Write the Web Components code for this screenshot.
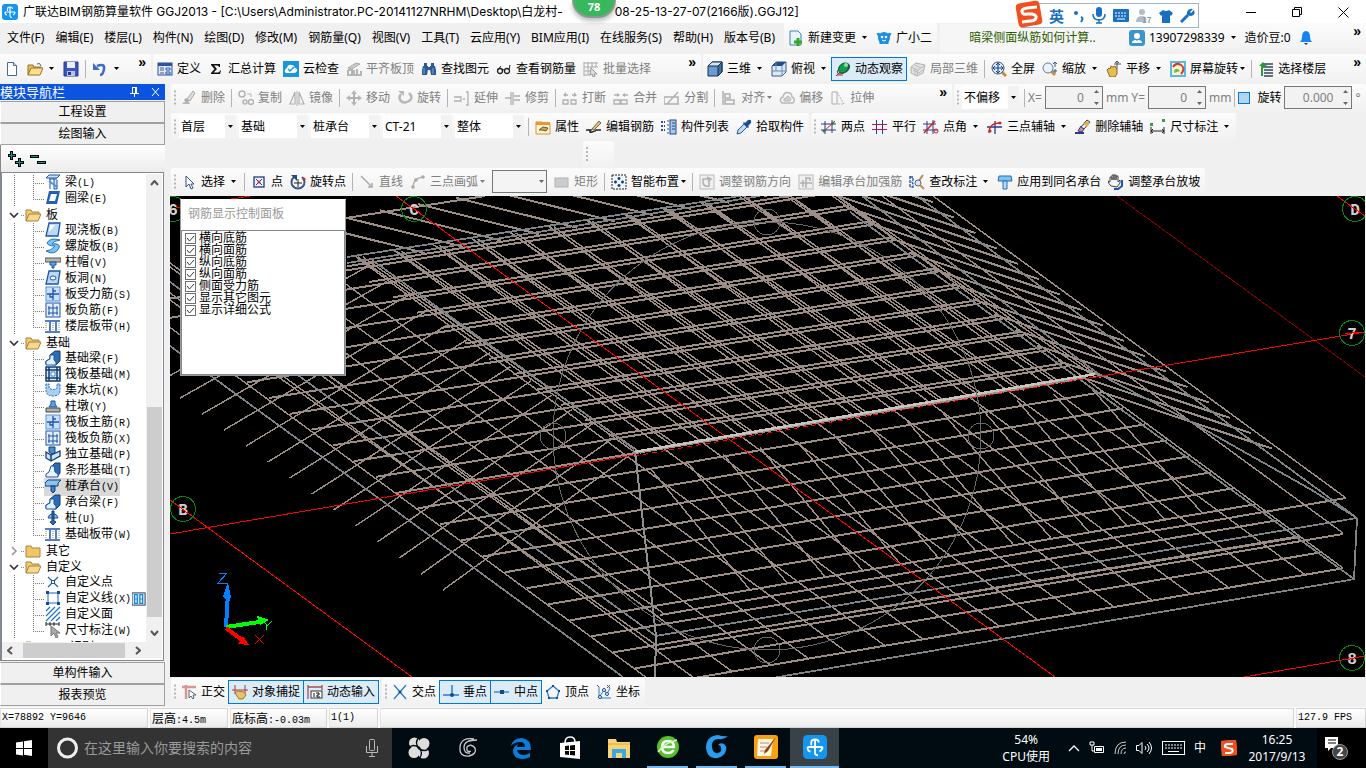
<!DOCTYPE html>
<html lang="zh-CN">
<head>
<meta charset="utf-8">
<title>广联达BIM钢筋算量软件 GGJ2013</title>
<style>
    html, body { height: 100%; margin: 0; }
    body {
        background: #f0f0f0;
        color: #000;
        font: 12px/16px "Noto Sans", "Noto Sans CJK SC", sans-serif;
        overflow: hidden;
    }
</style>
</head>
<body>
<ggj-app></ggj-app>

<script>
const ICONS = {
    app: '<rect width="16" height="16" rx="3" fill="#1296f0"/><path d="M5.500 7V5q0-2 2.500-2t2.500 2M8 3v9q0 1.500 2 1.500M3 8h10M3 8q0 3 2 3M13 8q0 2-2 3" fill="none" stroke="#fff" stroke-width="1.200"/>',
    newdoc: '<path d="M3.500 1.500h6l3 3v10h-9z" fill="#fff" stroke="#4a6a94"/><path d="M9.500 1.500v3h3" fill="#cfe0f4" stroke="#4a6a94"/>',
    open: '<path d="M1 14V4h5l1 2h7v3" fill="#f0c050" stroke="#94702a"/><path d="M1 14l3-7h12l-3 7z" fill="#ffe08a" stroke="#94702a"/><path d="M10 3q3-2 4 2" fill="none" stroke="#557"/>',
    save: '<path d="M1 1h14v14H1z" fill="#3a56c0" stroke="#223a8c"/><path d="M4 1h8v6H4z" fill="#e8eefc"/><path d="M4 10h8v5H4z" fill="#b8c4e8"/><path d="M5 11h3v3H5z" fill="#223a8c"/>',
    undo: '<path d="M5 5q8-3 7 3t-4 6" fill="none" stroke="#3c6cc8" stroke-width="2.500"/><path d="M1 2v7h7z" fill="#3c6cc8"/>',
    define: '<rect x="1" y="2" width="14" height="12" fill="#dfeafc" stroke="#2a52a0"/><path d="M1 2h14v3H1z" fill="#2a52a0"/><path d="M3 7h4M3 9h4M3 12h4" stroke="#557"/><path d="M9 7h4v2H9zM9 11h4v2H9z" fill="#fff" stroke="#2a52a0"/>',
    sigma: '<path d="M3 3h9v3h-1q0-1.500-2-1.500H6L9 8l-3.500 3.500H10q1.500 0 2-2h1L12 13H3v-1l3.500-4L3 4z" fill="#111"/>',
    cloud: '<rect width="16" height="16" fill="#1a96dc"/><path d="M4 12q-3 0-2-3 1-2 2-2 1-4 5-3 2 0 3 3 3 1 2 3-1 2-3 2z" fill="#fff"/><path d="M5 8l2 2 4-4" fill="none" stroke="#1a96dc" stroke-width="1.500"/>',
    slabtop: '<path d="M2 7l8-5 4 1-8 5z" fill="#ccc" stroke="#aaa"/><path d="M2 9h4v5h9v-4M8 9v4M11 8v5M2 9v5h5" fill="none" stroke="#b4b4b4" stroke-width="2"/>',
    binocular: '<path d="M3 2h3v3H3zM10 2h3v3h-3zM2 5h5v3l-1 6H1V9zM9 5h5l1 4v5h-5L9 8z" fill="#2c5a94"/><path d="M6 6h4v3H6z" fill="#2c5a94"/><path d="M3 7v6M12 7v6" stroke="#8ac"/>',
    glasses: '<circle cx="4" cy="10" r="2.500" fill="none" stroke="#222" stroke-width="1.300"/><circle cx="11" cy="10" r="2.500" fill="none" stroke="#222" stroke-width="1.300"/><path d="M6 9q1-1 2 0M2 9l3-4M13 9l1-5" fill="none" stroke="#222"/>',
    batch: '<path d="M1 1v14M5 1v13M9 1v6M13 1v5M1 2h14M1 6h14M1 10h7M1 14h6" stroke="#aaa" fill="none"/><path d="M8 7l6 6h-3l1 3h-2l-1-3-2 1z" fill="#ddd" stroke="#999"/>',
    cube: '<path d="M1 5l4-4h10v10l-4 4H1z" fill="#6a9cd0" stroke="#16304c"/><path d="M1 5l4-4h10l-4 4z" fill="#d4e6f8" stroke="#16304c"/><path d="M11 5v10l4-4V1z" fill="#3e6ea8" stroke="#16304c"/>',
    cubetop: '<path d="M1 5l4-4h10v10l-4 4H1z" fill="#dceaf8" stroke="#3a5a80"/><path d="M1 5l4-4h10l-4 4z" fill="#204c88"/><path d="M11 5v10M5 1v9H1M5 10h10" stroke="#6a8cb4" fill="none"/>',
    orbit: '<ellipse cx="9" cy="7" rx="6" ry="4.500" transform="rotate(-35 9 7)" fill="#1c9a4c" stroke="#0a6030"/><path d="M1 15l4-4M3 9q-2 4 2 4 8-1 9-9" stroke="#345" fill="none"/><circle cx="11" cy="4" r="2" fill="#8ee0a0"/><path d="M2 14h6" stroke="#c33"/>',
    localcube: '<path d="M1 6l5-4 9 2-2 8-6 3-6-3z" fill="#e4e4e4" stroke="#b0b0b0"/><path d="M1 6l7 3 7-5M8 9l-1 6M5 4l6 3M3 9l6 3 5-4M5 8v6" fill="none" stroke="#b8b8b8"/>',
    full: '<path d="M10 10l5 5" stroke="#c8903c" stroke-width="3"/><circle cx="7" cy="7" r="6" fill="#dceaf8" stroke="#34506c"/><path d="M7 2v10M2 7h10" stroke="#234a8c" stroke-width="1.200"/><path d="M5 4l2-2 2 2M5 10l2 2 2-2M4 5L2 7l2 2M10 5l2 2-2 2" fill="none" stroke="#234a8c"/>',
    zoom: '<path d="M9 10l4 4" stroke="#c8903c" stroke-width="3"/><circle cx="6" cy="7" r="5" fill="#e8f2fc" stroke="#6a7c8c"/><path d="M13 1v5M11 3l2-2 2 2M11 10h4M13 8v4" stroke="#345a90" fill="none"/>',
    pan: '<path d="M1 9l2-2 1 1 1-3 2 1 2-1 1 2 1 1v5l-2 3H4z" fill="#e8bc50" stroke="#8c6a20"/><path d="M11 0v8M8 3h7M9 2l2-2 2 2" stroke="#456" fill="none"/>',
    screenrot: '<rect width="16" height="16" fill="#58b8e8"/><rect x="2" y="2" width="12" height="12" fill="#fff4d0"/><path d="M3 6q3-5 8-2t0 9" fill="none" stroke="#d43a2c" stroke-width="2"/><path d="M4 12q0-5 4-4l2 2z" fill="#6cbc4c"/>',
    floors: '<path d="M4 3h11M4 6h11M6 9h9M6 12h9M6 15h9" stroke="#345" stroke-width="1.500"/><path d="M1 5l4-4 4 4z" fill="#2a9a3c"/><path d="M4 5v10" stroke="#2a9a3c" stroke-width="2"/>',
    report: '<path d="M2 1h8l3 3v11H2z" fill="#e8f4fc" stroke="#3a84b8"/><path d="M10 8v8M6 12h8" stroke="#3aa424" stroke-width="3"/>',
    mascot: '<path d="M2 3q1 4 4 3M14 3q-1 4-4 3M5 11v3M11 11v3" fill="none" stroke="#1a8ee0" stroke-width="3"/><circle cx="8" cy="8" r="6" fill="#1a8ee0"/><circle cx="6" cy="7" r="1.300" fill="#fff"/><circle cx="10" cy="7" r="1.300" fill="#fff"/><path d="M6 10q2 2 4 0" stroke="#fff" fill="none"/>',
    user: '<rect width="16" height="16" rx="3" fill="#3c94cc"/><circle cx="8" cy="6" r="3" fill="#fff"/><path d="M3 13q0-3 4-3l1 1 1-1q4 0 4 3z" fill="#fff"/>',
    bell: '<path d="M8 1q4 0 4 6 0 3 2 5H2q2-2 2-5 0-6 4-6z" fill="#1684f0"/><path d="M6 13h4l-2 2z" fill="#234"/>',
    erase: '<path d="M1 14h8l-1-2H3z" fill="#b8b8b8"/><path d="M6 9l6-8 2 2-5 8z" fill="#ddd" stroke="#aaa"/><path d="M4 9l3 3" stroke="#aaa" stroke-width="3"/>',
    copy: '<circle cx="4" cy="4" r="3" fill="none" stroke="#b4b4b4" stroke-width="1.500"/><circle cx="7" cy="12" r="2" fill="none" stroke="#b4b4b4" stroke-width="1.500"/><circle cx="13" cy="12" r="2.500" fill="none" stroke="#b4b4b4" stroke-width="1.500"/><path d="M9 4h4v3" fill="none" stroke="#b4b4b4"/>',
    mirror: '<path d="M6 2v12H1zM10 2v12h5z" fill="none" stroke="#b0b0b0" stroke-width="1.200"/><path d="M8 1v15" stroke="#b0b0b0"/>',
    move: '<path d="M8 2v12M2 8h12" stroke="#b0b0b0" stroke-width="2"/><path d="M5 4l3-4 3 4zM5 12l3 4 3-4zM4 5L0 8l4 3zM12 5l4 3-4 3z" fill="#b8b8b8"/>',
    rotate: '<path d="M4 4q-3 4 0 7t8 0 0-8" fill="none" stroke="#b8b8b8" stroke-width="2.500"/><path d="M1 1h6v5z" fill="#b8b8b8"/>',
    extend: '<path d="M0 7h7v4H0M9 9h2M12 2h2v13h-2" fill="none" stroke="#b0b0b0" stroke-width="1.300"/>',
    trim: '<path d="M0 8h6M6 2v13M8 2v13M9 6h6M9 10h6" fill="none" stroke="#b0b0b0" stroke-width="1.300"/>',
    break: '<path d="M1 10h5v4H1zM9 10h5v4H9zM2 5h4M10 5h4" fill="none" stroke="#b0b0b0" stroke-width="1.300"/><path d="M4 2L1 5l3 2M12 2l3 3-3 2" fill="#b0b0b0"/>',
    merge: '<path d="M1 10h6v4H1zM8 10h6v4H8zM1 5h5M10 5h5" fill="none" stroke="#b0b0b0" stroke-width="1.300"/><path d="M4 3l3 2-3 2M12 3L9 5l3 2" fill="#b0b0b0"/>',
    split: '<path d="M0 7h14v7H0zM3 14L14 2" fill="none" stroke="#b0b0b0" stroke-width="1.500"/>',
    align: '<path d="M2 1v14M4 4h5v4H4zM4 10h9v4H4z" fill="none" stroke="#b0b0b0" stroke-width="1.500"/>',
    offset: '<path d="M3 13q-4-4 1-6 1-6 7-4 2 1 2 4 4 2 1 6z" fill="none" stroke="#b8b8b8" stroke-width="1.500"/><path d="M5 11q-1-3 2-3 2-4 4 0 2 1 0 3z" fill="#d0d0d0" stroke="#b8b8b8"/>',
    stretch: '<path d="M2 2h5v12H2z" fill="none" stroke="#b0b0b0"/><path d="M7 2l7 12H7" fill="none" stroke="#b0b0b0" stroke-dasharray="2 1"/>',
    props: '<path d="M1 3h6l1 2h7v10H1z" fill="#fff4d8" stroke="#e09030"/><path d="M1 3h14v3H1z" fill="#e8982c"/><path d="M4 11l4-3 5 1-2 3-4-1z" fill="#d8a83c" stroke="#654"/>',
    editbar: '<path d="M0 11h5q-3 3 1 2t4-2h5" fill="none" stroke="#222" stroke-width="1.300"/><path d="M6 10l7-8 2 2-7 7z" fill="#e8c060" stroke="#765"/>',
    list: '<path d="M0 3h4M0 7h4M0 11h4" stroke="#2a52a0" stroke-width="2" stroke-dasharray="2 1"/><path d="M6 2h2M6 6h2M6 10h2M6 14h2" stroke="#2a52a0"/><rect x="9" y="1" width="6" height="14" fill="#a8c8f0" stroke="#234a80"/><path d="M11 4h3M11 7h3M11 10h3" stroke="#234a80"/>',
    picker: '<path d="M1 15l1-4 6-6 3 3-6 6z" fill="#bcdcf8" stroke="#2a5a9a"/><path d="M7 4l5 5 1-1-1-1 3-3q1-4-3-3L9 4 8 3z" fill="#1c4c94"/>',
    twopoint: '<path d="M4 2v13M11 1v13M0 5h15M0 11h15" stroke="#2a3a8a"/><path d="M2 13L14 2" stroke="#c22"/><circle cx="3" cy="12" r="1.500" fill="#284"/><circle cx="12" cy="4" r="1.500" fill="#284"/>',
    parallel: '<path d="M4.500 1v14M10.500 1v14" stroke="#2a3a8a"/><path d="M0 5.500h15M0 10.500h15" stroke="#b02040"/>',
    angle: '<path d="M4 2v13M10 1v14M0 5h13M0 11h15" stroke="#2a3a8a"/><path d="M1 14L12 2" stroke="#c22" stroke-width="1.500"/><circle cx="13" cy="12" r="2" fill="none" stroke="#c22"/>',
    threeaxis: '<path d="M0 8h15M8 2v13" stroke="#2a3a8a" stroke-width="1.300"/><path d="M2 14q0-10 11-10" fill="none" stroke="#c22" stroke-width="1.300"/><circle cx="13" cy="4" r="1.500" fill="#c22"/><circle cx="3" cy="12" r="1.500" fill="#c22"/>',
    delaxis: '<path d="M0 14h9" stroke="#2a3a8a" stroke-width="2"/><path d="M3 12l3-5 3 3-2 3z" fill="#d88" stroke="#2a3a8a"/><path d="M6 8l6-7 3 2-6 7z" fill="#f4e8c0" stroke="#2a3a8a"/><path d="M9 5l3 3 3-4-3-2z" fill="#e8b040"/>',
    dimension: '<path d="M1 8v7M14 8v7M1 12h13M3 10l-2 2 2 2M12 10l2 2-2 2" fill="none" stroke="#222"/><path d="M0 4h3v3H0zM12 0h3v3h-3z" fill="#3a9a4a"/>',
    cursor: '<path d="M5 2v11l3-3 2 5 2-1-2-4h3z" fill="#fff" stroke="#34507c"/>',
    point: '<rect x="3" y="3" width="10" height="10" fill="#eef4ff" stroke="#223a80" stroke-width="1.300"/><path d="M5 5l6 6M11 5l-6 6" stroke="#223a80"/><circle cx="8" cy="8" r="1.500" fill="#d22"/>',
    rotpoint: '<path d="M4 3a6.500 6.500 0 1 0 8 0" fill="none" stroke="#3a5a8c" stroke-width="2"/><path d="M8 5v8M4 9h8" stroke="#222"/><path d="M1 1h6v6z" fill="#24488c"/><circle cx="14" cy="5" r="1.500" fill="#c22"/>',
    line: '<path d="M2 2l11 11" stroke="#aaa" stroke-width="1.500"/><path d="M13 9v4H9" fill="none" stroke="#aaa" stroke-width="1.500"/>',
    arc: '<path d="M3 14Q3 4 13 3" fill="none" stroke="#b0b0b0" stroke-width="1.500"/><circle cx="13" cy="3" r="1.800" fill="#aaa"/><circle cx="3" cy="13" r="1.800" fill="#aaa"/><circle cx="6" cy="6" r="1.800" fill="#aaa"/>',
    rect: '<rect x="1" y="4" width="13" height="9" fill="#ccc" stroke="#b4b4b4"/>',
    smart: '<rect x="1" y="1" width="14" height="14" fill="#eef6ff" stroke="#222" stroke-dasharray="2 1"/><path d="M8 3v3M8 10v3M3 8h3M10 8h3M6.500 4.500h3M6.500 11.500h3M4.500 6.500v3M11.500 6.500v3" stroke="#1c3c74" stroke-width="1.500"/>',
    dirbar: '<rect x="1" y="1" width="14" height="14" fill="#f0f0f0" stroke="#bbb"/><path d="M4 5h6v7q-5 1-6-3zM8 3l4 2-3 3" fill="none" stroke="#b0b0b0" stroke-width="1.500"/>',
    capbar: '<rect x="1" y="1" width="14" height="14" fill="#f0f0f0" stroke="#bbb"/><path d="M8 3v11M2 9h12M8 4h4v3M5 6v7" fill="none" stroke="#b0b0b0" stroke-width="1.500"/>',
    checkdim: '<path d="M1 2v12M1 3h3v3l-1 2 1 2v3H1" fill="none" stroke="#1c54a8" stroke-width="1.300" stroke-dasharray="3 1"/><path d="M14 1L9 8" stroke="#b84" stroke-width="2"/><circle cx="9" cy="9" r="3" fill="#dce8f4" stroke="#567"/><path d="M11 11l4 4" stroke="#c8903c" stroke-width="2"/>',
    applycap: '<path d="M1 7l1-5h12l1 5z" fill="#7cc4f4" stroke="#2a6cb0"/><path d="M6 7h4v8H6z" fill="#b4dcf8" stroke="#2a6cb0"/>',
    slopecap: '<path d="M14 6v6l-4 3H6" fill="none" stroke="#2454b0" stroke-width="2"/><path d="M3 12Q0 9 0 7l2 1V3h2v3-5h2v5-5h2v5-4h2v6l2-2v3l-3 4z" fill="#f4f4f4" stroke="#444"/>',
    ortho: '<path d="M1 3h14M5 1v14" stroke="#d89890" stroke-width="2.500"/><path d="M8 6v8l2-2 2 3 1-1-1-3h3z" fill="#fff" stroke="#567"/>',
    osnap: '<path d="M3 1v9M13 1v9M0 6h16" stroke="#a83838"/><path d="M3 9l3-2 6 1 2 3-3 4H7z" fill="#e8c468" stroke="#a07820"/>',
    dyn: '<path d="M1 1v14M15 1v5M1 3h14" stroke="#a85050" fill="none" stroke-width="1.300"/><rect x="4" y="7" width="11" height="7" fill="#fff" stroke="#333"/><path d="M7 9v4M9 9h3v2h-2v2h3" stroke="#111" fill="none"/>',
    cross: '<path d="M2 1l12 14M14 1L2 15" stroke="#2a7cd0" stroke-width="1.300"/><circle cx="8" cy="8" r="1.500" fill="#124a94"/>',
    perp: '<path d="M0 11h16M9 1v10" stroke="#2a7cd0" stroke-width="1.500"/><circle cx="9" cy="11" r="2" fill="#124a94"/>',
    mid: '<path d="M0 8h15" stroke="#2a7cd0" stroke-width="1.300"/><rect x="6" y="6" width="4" height="4" fill="#124a94"/>',
    vertex: '<path d="M8 2l6 5-2 7H4L2 7z" fill="none" stroke="#2a7cd0" stroke-width="1.300"/><path d="M7 1h2v2H7zM1 6h2v2H1zM13 6h2v2h-2zM3 13h2v2H3zM11 13h2v2h-2z" fill="#124a94"/>',
    coord: '<path d="M3 3v11h12M4 12l4-6 3 4 3-6" fill="none" stroke="#2a7cd0"/><circle cx="8" cy="6" r="1.500" fill="#fff" stroke="#124a94"/><circle cx="11" cy="10" r="1.500" fill="#fff" stroke="#124a94"/><circle cx="4" cy="13" r="1.500" fill="#fff" stroke="#124a94"/><path d="M1 1l2 2M11 1l3 3M14 1l-3 3" stroke="#456"/>',
    folderopen: '<path d="M1 14V3h5l1 2h7v3" fill="#f4cc70" stroke="#a8823c"/><path d="M1 14l3-7h12l-3 7z" fill="#f8d890" stroke="#a8823c"/>',
    folder: '<path d="M1 14V3h5l1 2h8v9z" fill="#f0c668" stroke="#a8823c"/>',
    beam: '<path d="M1 4l3-3h11l-3 3zM4 5h8M5 5v10M9 5v10h3V6" fill="#cfe6fa" stroke="#1c54a8"/><path d="M4 7l8 6" stroke="#4a94d8" stroke-width="2"/>',
    ring: '<path d="M4 1h11l-3 13H1z" fill="#2460b4"/><path d="M6 4h6l-2 7H4z" fill="#fff"/>',
    slab: '<path d="M4 1h11l-2 13H1z" fill="#b8daf8" stroke="#1c54a8" stroke-width="1.300"/><path d="M5 3h5L4 10z" fill="#fff"/>',
    spiral: '<path d="M15 2Q5-1 2 5q1 3 8 3-4 5-9 5 9 5 13-3 2-5-7-4 1-3 8-4z" fill="#7ec0f0" stroke="#1c74c0"/>',
    cap: '<path d="M0 4h16v4H0z" fill="#b8b8b0" stroke="#555"/><path d="M5 8h6v3H9v3H7v-3H5z" fill="#5aa4e0" stroke="#1c54a8"/>',
    hole: '<path d="M4 1h11l-2 13H1z" fill="#b8daf8" stroke="#1c54a8" stroke-width="1.300"/><ellipse cx="8" cy="8" rx="3" ry="2" fill="#fff" stroke="#1c54a8"/>',
    bars: '<rect x="1" y="1" width="14" height="14" fill="#c8e0f8" stroke="#5a8cd0"/><path d="M2 8h12M8 2v12M8 5h3M5 8v3h3" fill="none" stroke="#1c54a8" stroke-width="1.300"/>',
    grid: '<rect x="1" y="1" width="14" height="14" fill="#e4f0fc" stroke="#1c54a8"/><path d="M3 6h10M3 11h10M8 2v12M4 4v9M12 4v9" stroke="#1c54a8"/>',
    strip: '<path d="M0 3h15M0 14h15" stroke="#1c54a8" stroke-width="1.500"/><path d="M5 4v9M11 4v9" stroke="#1c54a8" stroke-width="1.500"/><path d="M1 5v8M8 5v8M14 5v8" stroke="#888" stroke-dasharray="1 1"/>',
    fbeam: '<path d="M1 14v-3l4-2V5l5-4h5v10l-4 4z" fill="#2c6cb4" stroke="#123c74"/><path d="M5 5h4v5l2 2v3H1v-4l4-2z" fill="#e0f0fc" stroke="#1c54a8"/>',
    raft: '<rect x="1" y="1" width="14" height="14" fill="#d8e8f8" stroke="#123c74" stroke-width="1.500"/><path d="M4 1v14M12 1v14M1 4h14M1 12h14" stroke="#123c74" stroke-width="1.500"/><path d="M6 6h4v4H6z" fill="#fff" stroke="#4a84c0"/>',
    sump: '<path d="M1 2v6q0 6 7 6t7-6V2h-3v4q-4 3-8 0V2z" fill="#a8d0f4" stroke="#2464b0" stroke-dasharray="2 1"/>',
    pier: '<path d="M1 10h14v4H1z" fill="#b0b0a8" stroke="#444"/><path d="M6 3h4v3l2 3H4l2-3z" fill="#5aa4e0" stroke="#1c54a8"/>',
    pad: '<path d="M1 6l5 3 9-4v5l-9 5-5-3z" fill="#cce4f8" stroke="#123c74" stroke-width="1.300"/><path d="M4 1h6v6l-3 1-3-2z" fill="#4a8ccc" stroke="#123c74"/><path d="M6 9v6" stroke="#123c74" stroke-width="1.500"/>',
    stripf: '<path d="M6 5l4-4h5v10l-3 4z" fill="#2c6cb4" stroke="#123c74"/><path d="M6 4h3l1 6 3 2v3H1v-3l3-2z" fill="#e8f4fc" stroke="#1c54a8"/>',
    pilecap: '<path d="M0 5l3-3h13l-3 3v3H0z" fill="#8cc4f0" stroke="#123c74"/><path d="M6 8h4v5l-2 2-2-2z" fill="#3c84cc" stroke="#123c74"/>',
    pile: '<path d="M3 8q1-4 4-4h2q3 0 4 4z" fill="#8cc4f0" stroke="#1c4c94"/><path d="M7 1h2v10l2 1-3 3-3-3 2-1z" fill="#2c6cb4" stroke="#123c74"/>',
    custpoint: '<path d="M3 3l10 10M13 3L3 13" stroke="#1c64b8" stroke-width="1.200"/><rect x="6.500" y="6.500" width="3" height="3" fill="#fff" stroke="#1c54a8"/>',
    custline: '<rect x="3" y="3" width="10" height="10" fill="none" stroke="#1c64b8"/><path d="M1 1h3v3H1zM12 1h3v3h-3zM1 12h3v3H1zM12 12h3v3h-3z" fill="#124a94"/>',
    custface: '<path d="M1 5l4-4M1 10l9-9M1 15L15 1M6 15l9-9M11 15l4-4" stroke="#1c74c8" stroke-width="1.200"/>',
    dimcur: '<path d="M1 2h13M1 0v4M14 0v4M5 0v4M9 0v4" stroke="#222"/><path d="M6 4v10l3-3 2 5 2-1-2-4h4z" fill="#aaa" stroke="#777"/>',
    film: '<rect x="0" y="1" width="15" height="14" fill="#cfe6fa" stroke="#234"/><path d="M3 3h3v10H3zM9 3h3v10H9z" fill="#fff" stroke="#1c84d8" stroke-width="1.500"/><path d="M3 8h3M9 8h3" stroke="#1c84d8"/>'
};

function svg(name, size = 16) {
    return `<svg width="${size}" height="${size}" viewBox="0 0 16 16" aria-hidden="true">${ICONS[name] || ""}</svg>`;
}

// Small helper: every element below is a shadow root plus a string of markup.
function define(name, render) {
    customElements.define(name, class extends HTMLElement {
        constructor() {
            super();
            this.attachShadow({ mode: "open" });
        }

        connectedCallback() {
            this.shadowRoot.innerHTML = render(this);
        }
    });
}

const CARET = '<svg class="caret" width="5" height="3" viewBox="0 0 5 3"><path d="M0 0h5L2.500 3z" fill="currentColor"/></svg>';

define("tool-button", (el) => `
    <style>
        :host { display: block; flex: none; }
        button {
            display: flex; align-items: center; gap: 4px;
            height: 16px; margin: 0; padding: 0; border: 0;
            background: none; color: inherit; font: inherit; white-space: nowrap;
        }
        svg { display: block; flex: none; }
        .caret { margin: 0 2px; }
        :host([tight]) .caret { margin: 0 0 0 -2px; }
        button:disabled { color: #808080; }
        :host([active]) button { background: #dcebf8; box-shadow: 0 0 0 3px #dcebf8, 0 0 0 4px #0078d7; }
    </style>
    <button type="button" ${el.hasAttribute("disabled") ? "disabled" : ""}>
        ${el.hasAttribute("icon") ? svg(el.getAttribute("icon")) : ""}<slot></slot>${el.hasAttribute("caret") ? CARET : ""}
    </button>`);

define("tool-sep", () => `
    <style>
        :host { display: block; flex: none; width: 1px; height: 18px; margin: 0 -1px; background: #b4b4b4; }
    </style>`);

define("tool-group", (el) => `
    <style>
        :host {
            display: flex; flex: none; box-sizing: border-box; height: 100%; padding-right: 5px;
            border-radius: 2px; background: linear-gradient(#fcfcfc, #f1f1f1);
        }
        .grip { flex: none; width: 10px; }
        .grip svg { display: block; height: 100%; margin-left: 3px; }
        .items { display: flex; flex: 1; min-width: 0; align-items: center; gap: 7px; }
        .more {
            align-self: flex-start; height: 16px; margin: 0; padding: 0; border: 0; background: none;
            font: 700 14px/16px "Liberation Sans", sans-serif;
        }
        :host([nogrip]) .grip { width: 4px; }
    </style>
    <div class="grip">${el.hasAttribute("nogrip") ? "" : '<svg width="2" viewBox="0 0 2 14"><path d="M0 0h2v2H0zM0 4h2v2H0zM0 8h2v2H0zM0 12h2v2H0z" fill="#b8b8b8"/></svg>'}</div>
    <div class="items"><slot></slot></div>
    ${el.hasAttribute("more") ? '<button class="more" type="button">»</button>' : ""}`);

define("tool-row", () => `
    <style>
        :host { display: flex; flex: none; height: var(--row, 28px); box-sizing: border-box; padding-bottom: 1px; gap: 2px; }
    </style>
    <slot></slot>`);

define("combo-box", (el) => `
    <style>
        :host { display: grid; flex: none; width: var(--width, 69px); height: 23px; background: #fff; align-items: center; }
        select {
            grid-area: 1 / 1; box-sizing: border-box; width: 100%; height: 100%; margin: 0; padding: 0 12px 0 2px;
            appearance: none; border: 0; border-radius: 0; background: linear-gradient(to left, #f2f2f2 11px, #fff 11px);
            color: inherit; font: inherit;
        }
        .caret { grid-area: 1 / 1; justify-self: end; margin-right: 3px; pointer-events: none; }
        :host([framed]) { color: #666; }
        :host([framed]) select { border: 1px solid #777; background: #f4f4f4; }
    </style>
    <select aria-label="${el.getAttribute("label")}"><option>${el.getAttribute("value") || ""}</option></select>${CARET}`);

define("spin-box", (el) => `
    <style>
        :host { display: grid; flex: none; width: var(--width, 58px); height: 23px; }
        input {
            grid-area: 1 / 1; box-sizing: border-box; width: 100%; height: 100%; margin: 0; padding: 0 18px 0 2px;
            border: 1px solid #777; background: #f2f2f2; color: #808080; font: inherit; text-align: right; appearance: textfield;
        }
        input::-webkit-inner-spin-button { display: none; }
        svg { grid-area: 1 / 1; place-self: center end; margin-right: 4px; pointer-events: none; }
    </style>
    <input type="number" step="any" aria-label="${el.getAttribute("label")}" value="${el.getAttribute("value")}">
    <svg width="5" height="15"><path d="M0 3h5L2.500 0zM0 12h5l-2.500 3z" fill="#666"/></svg>`);

define("title-bar", () => `
    <style>
        :host { display: flex; flex: none; align-items: center; height: 23px; padding-left: 2px; gap: 5px; background: #fff; }
        h1 { flex: 1; margin: 0; font: 12px/16px "Inter", "Noto Sans CJK SC", sans-serif; white-space: nowrap; }
        .controls { display: flex; }
        button { width: 46px; height: 23px; padding: 0; border: 0; background: none; }
        button svg { display: inline-block; vertical-align: middle; }
    </style>
    ${svg("app")}
    <h1><slot></slot></h1>
    <div class="controls">
        <button type="button" aria-label="最小化"><svg width="10" height="10"><path d="M0 5.500h10" stroke="#000"/></svg></button>
        <button type="button" aria-label="还原"><svg width="10" height="10"><path d="M.5 2.500h7v7h-7zM2.500 2V.5h7v7H8" fill="none" stroke="#000"/></svg></button>
        <button type="button" aria-label="关闭"><svg width="11" height="11"><path d="M.5.5l10 10M10.500.5l-10 10" stroke="#000"/></svg></button>
    </div>`);

define("menu-bar", () => `
    <style>
        :host { display: flex; flex: none; height: 29px; align-items: center; }
        nav { display: flex; flex: 0 0 784px; padding-left: 2px; box-sizing: border-box; }
        nav button { flex: none; margin: 0; padding: 0 6px 0 5px; border: 0; background: none; font: inherit; white-space: nowrap; }
        .tip { flex: 1; margin-left: 3px; height: 28px; background: #f6f6f6; display: flex; align-items: center; justify-content: center; }
        a { color: #2c5c00; text-decoration: none; }
        .account { flex: 0 0 241px; }
    </style>
    <nav>${["文件(F)", "编辑(E)", "楼层(L)", "构件(N)", "绘图(D)", "修改(M)", "钢筋量(Q)", "视图(V)", "工具(T)", "云应用(Y)", "BIM应用(I)", "在线服务(S)", "帮助(H)", "版本号(B)"].map((t) => `<button type="button">${t}</button>`).join("")}</nav>
    <tool-group nogrip>
        <tool-button icon="report" caret>新建变更</tool-button>
        <tool-button icon="mascot">广小二</tool-button>
    </tool-group>
    <div class="tip"><a href="#tip">暗梁侧面纵筋如何计算..</a></div>
    <tool-group class="account" nogrip more>
        <tool-button icon="user" caret>13907298339</tool-button>
        <tool-button>造价豆:0</tool-button>
        <tool-button icon="bell" aria-label="消息"></tool-button>
    </tool-group>`);

define("module-dock", () => `
    <style>
        :host { display: flex; flex: none; flex-direction: column; width: 165px; }
        header { display: flex; flex: none; align-items: center; height: 16px; margin-bottom: 1px; background: #0a54e0; color: #fff; gap: 12px; padding-right: 5px; }
        header span { flex: 1; font-size: 13px; line-height: 16px; }
        header button { width: 9px; height: 11px; padding: 0; border: 0; background: none; }
        header svg { display: block; }
        .section {
            flex: none; height: 22px; margin: 0; padding: 0; border: 1px solid #a0a0a0; border-left-color: #fff;
            background: #f0f0f0; color: inherit; font: inherit;
        }
        .tools { flex: none; display: flex; align-items: center; height: 27px; padding-left: 7px; border-left: 1px solid #888; background: linear-gradient(#fff, #ececec); }
        tree-view { flex: 1; min-height: 0; }
    </style>
    <header><span>模块导航栏</span>
        <button type="button" aria-label="固定"><svg width="9" height="10"><path d="M2 .5h5M2.500 0v6M5.500 0v6M6.500 0v6M0 6.500h9M4.500 7v3" stroke="#fff"/></svg></button>
        <button type="button" aria-label="关闭"><svg width="9" height="10"><path d="M1 1l7 8M8 1L1 9" stroke="#fff"/></svg></button>
    </header>
    <button class="section" type="button">工程设置</button>
    <button class="section" type="button">绘图输入</button>
    <div class="tools"><svg width="40" height="16" shape-rendering="crispEdges">
        <path d="M0 4.500h8M3.500 0v9M7 11.500h9M11.500 7v9M22 5.500h9M29 11.500h9" stroke="#000" stroke-width="3"/>
        <path d="M1 4.500h6M3.500 1v7M8 11.500h7M11.500 8v7M23 5.500h7M30 11.500h7" stroke="#0a9a88"/>
    </svg></div>
    <tree-view></tree-view>
    <button class="section" type="button">单构件输入</button>
    <button class="section" type="button">报表预览</button>`);

const TREE = [
    ["beam", "梁", "(L)"], ["ring", "圈梁", "(E)"],
    ["open", "板"],
    ["slab", "现浇板", "(B)"], ["spiral", "螺旋板", "(B)"], ["cap", "柱帽", "(V)"], ["hole", "板洞", "(N)"],
    ["bars", "板受力筋", "(S)"], ["grid", "板负筋", "(F)"], ["strip", "楼层板带", "(H)"],
    ["open", "基础"],
    ["fbeam", "基础梁", "(F)"], ["raft", "筏板基础", "(M)"], ["sump", "集水坑", "(K)"], ["pier", "柱墩", "(Y)"],
    ["bars", "筏板主筋", "(R)"], ["grid", "筏板负筋", "(X)"], ["pad", "独立基础", "(P)"], ["stripf", "条形基础", "(T)"],
    ["pilecap", "桩承台", "(V)"], ["fbeam", "承台梁", "(F)"], ["pile", "桩", "(U)"], ["strip", "基础板带", "(W)"],
    ["closed", "其它"],
    ["open", "自定义"],
    ["custpoint", "自定义点", ""], ["custline", "自定义线", "(X)"], ["custface", "自定义面", ""], ["dimcur", "尺寸标注", "(W)"]
];

define("tree-view", () => {
    const isRoot = (r) => !r || r[0] === "open" || r[0] === "closed";
    const rows = TREE.map((r, i) => {
        if (isRoot(r)) {
            const chevron = r[0] === "open" ? '<path d="M8 6l4 4 4-4" stroke="#333"/>' : '<path d="M10 4l4 4-4 4" stroke="#999"/>';
            return `<li><svg width="23" height="16"><g fill="none" stroke-width="1.600">${chevron}</g><path d="M19 8.500h4" stroke="#888" stroke-dasharray="1 1"/></svg>${svg(r[0] === "open" ? "folderopen" : "folder")}<span class="root">${r[1]}</span></li>`;
        }
        const bottom = isRoot(TREE[i + 1]) ? 8 : 16;
        return `<li class="${r[1] === "桩承台" ? "on" : ""}"><svg width="42" height="16"><path d="M12.500 0v16M31.500 0v${bottom}M31 8.500h11" fill="none" stroke="#777" stroke-dasharray="1 1"/></svg>
            <span class="leaf">${svg(r[0])}<span class="name">${r[1]}<small>${r[2]}</small></span></span>${r[0] === "custline" ? svg("film", 14) : ""}</li>`;
    });
    return `
    <style>
        :host {
            display: grid; grid-template: 1fr 16px / 1fr 16px; box-sizing: border-box; margin: 0 1px 1px 0;
            padding: 1px 1px 2px 0; border: 1px solid #828790; border-left-width: 2px; background: #fff;
        }
        ul { min-height: 0; margin: 0; padding: 1px 0 0; overflow: hidden; list-style: none; }
        li { display: flex; height: 16px; align-items: center; line-height: 16px; white-space: nowrap; }
        li svg { display: block; flex: none; }
        .root { margin-left: 5px; }
        .leaf { display: flex; flex: none; padding: 0 1px; }
        .name { margin-left: 4px; }
        .on .leaf { background: #d9d9d9; }
        small { font: 10px/16px "Liberation Mono", monospace; }
        .bar { background: #f0f0f0; display: flex; align-items: center; justify-content: space-between; }
        .v { flex-direction: column; padding: 6px 0; }
        .v i { width: 15px; height: 210px; margin-top: 208px; background: #cdcdcd; }
        .h i { flex: none; width: 102px; height: 15px; background: #cdcdcd; }
        .h { padding: 0 5px; }
        .bar svg { fill: none; stroke: #555; stroke-width: 2; }
    </style>
    <ul>${rows.join("")}<li><svg width="23" height="16"></svg>${svg("folderopen")}<span class="root">CAD识别</span></li></ul>
    <div class="bar v"><svg width="9" height="6"><path d="M1 5l3.500-4L8 5"/></svg><i></i><svg width="9" height="6"><path d="M1 1l3.500 4L8 1"/></svg></div>
    <div class="bar h"><svg width="6" height="9"><path d="M5 1L1 4.500 5 8"/></svg><i></i><svg width="6" height="9"><path d="M1 1l4 3.500L1 8"/></svg></div>
    <div class="bar"></div>`;
});

define("rebar-panel", () => `
    <style>
        :host { display: flex; flex-direction: column; box-sizing: border-box; width: 166px; height: 177px; border: 1px solid #9a9a9a; border-top-color: #fff; background: #fff; }
        h2 { margin: 0; padding: 6px 7px 8px; color: #999; font: inherit; }
        div { flex: 1; padding-top: 1px; border: 1px solid #828790; }
        label { display: flex; align-items: center; height: 12px; padding-left: 3px; gap: 3px; line-height: 12px; }
        input { appearance: none; flex: none; width: 11px; height: 11px; margin: 0; border: 1px solid #707070; background: #fff; }
        input:checked { background: #fff url('data:image/svg+xml,<svg xmlns="http://www.w3.org/2000/svg" width="9" height="9"><path d="M1 4l2.500 3L8 2" fill="none" stroke="%23333"/></svg>'); }
    </style>
    <h2>钢筋显示控制面板</h2>
    <div>${["横向底筋", "横向面筋", "纵向底筋", "纵向面筋", "侧面受力筋", "显示其它图元", "显示详细公式"].map((t) => `<label><input type="checkbox" checked>${t}</label>`).join("")}</div>`);

// Wireframe of the pile cap CT-21. Each family of bars is a run of parallel
// lines, stepped between two corner points of the cap.
function buildScene() {
    const seg = (x1, y1, x2, y2) => `M${x1.toFixed(1)} ${y1.toFixed(1)}L${x2.toFixed(1)} ${y2.toFixed(1)}`;
    const ridgeHit = (y850, slope) => {
        // right ridge: x = 1101 + 1.367 (y - 391)
        const y = (y850 - slope * (1101 - 850 - 1.367 * 391)) / (1 + slope * 1.367);
        return [1101 + 1.367 * (y - 391), y];
    };
    let flat = "";
    let steep = "";
    let gray = "";

    // bottom mat, lower half
    for (let j = 0; j < 12; j++) {
        flat += seg(656.7 - 21.7 * j, 684.3 - 16 * j, 1343.3 - 22 * j, 568.3 - 16 * j);
    }
    flat += seg(396, 493, 1085, 378);
    // upper half: bottom bar to the left edge, top bar from the left ridge
    for (let k = 0; k < 12; k++) {
        const y850 = 401 - 19.2 * k;
        const [rx, ry] = ridgeHit(y850, 0.16);
        const left = Math.max(170, (y850 - 64) / 0.897);
        flat += seg(left, y850 + 0.16 * (850 - left), rx, ry);
        const lx = Math.max(347, 609 - 24 * k);
        flat += seg(lx, y850 - 4 + 0.16 * (850 - lx), rx - 4, ry - 3);
    }
    flat += seg(340, 219, 485, 196) + seg(656, 645, 1300, 537) + seg(656, 650, 1343, 534) + seg(660, 615, 1346, 498);

    // long bars of the bottom mat
    for (let m = 0; m < 19; m++) {
        const bx = 1343.3 - 38.2 * m;
        const by = 568.3 + 6.45 * m;
        const s = 0.735;
        let tx = bx - (by - 196) / s;
        let ty = 196;
        // stop at the far edge, which falls from (740,196) to (347,258)
        if (tx < 740) {
            tx = (by - s * bx - 312.7) / (-0.158 - s);
            ty = 312.7 - 0.158 * tx;
        }
        steep += seg(tx, ty, bx, by);
    }
    // paired bars of the top mat, and their bent ends below
    for (let k = 0; k < 13; k++) {
        const tx = 358 + 38.2 * k;
        const ty = 257 - 6 * k;
        const bx = 636 + 38.3 * k;
        const by = 453 - 6.3 * k;
        steep += seg(tx, ty, bx, by) + seg(tx + 5, ty, bx + 5, by);
        steep += seg(650 + 36.7 * k, 468 - 6.75 * k, 750 + 37.7 * k, 590 - 6.4 * k);
    }
    // hooks on the left and right faces
    for (let i = 0; i < 14; i++) {
        steep += seg(443 - 21.9 * i, 590 - 16 * i, 634 - 20.6 * i, 452 - 14.2 * i);
    }
    for (let i = 0; i < 17; i++) {
        const ex = 1272.3 - 21.2 * i;
        const ey = 448.7 - 15.4 * i;
        flat += seg(ex - 172, ey - 57, ex, ey);
    }
    for (let k = 0; k < 11; k++) {
        flat += seg(304 + 38 * k, 223 - 6.3 * k, 425 + 38 * k, 253 - 6.3 * k);
    }
    steep += seg(933, 196, 1346, 498) + seg(882, 196, 1343, 533);
    steep += seg(170, 263, 663, 613) + seg(170, 267, 660, 618) + seg(170, 300, 656, 645);

    gray += seg(347, 257, 740, 196) + seg(347, 263, 760, 196) + seg(372, 260, 634, 449);
    gray += seg(340, 470, 623, 677) + seg(170, 346, 340, 470) + seg(170, 282, 656, 636) + seg(656, 636, 1357, 518);
    gray += seg(917, 196, 1357, 518) + seg(850, 212, 1354, 579) + seg(625, 703, 1355, 579) + seg(1357, 518, 1354, 579);
    gray += "M862 196L1097 373 1193 423 1310 489 1357 518";

    const bubble = (x, y, t) => `<circle cx="${x}" cy="${y}" r="12.500" stroke="#008a10" fill="none"/><text x="${x}" y="${y + 6}">${t}</text>`;
    const ring = (x, y) => `<circle cx="${x}" cy="${y}" r="13"/>`;

    return `<svg class="scene" viewBox="170 196 1195 481" preserveAspectRatio="xMinYMin slice" shape-rendering="crispEdges">
        <rect x="170" y="196" width="1195" height="481" fill="#000"/>
        <g fill="none">
            <path d="${steep}" stroke="#9c8e86" stroke-width="1.500"/>
            <path d="${flat}" stroke="#9c8e86" stroke-width="2"/>
            <path d="${gray}" stroke="#808486" stroke-width="1.800"/>
            <path d="M1117 196L1365 377" stroke="#800000"/>
            <path d="M396 196L1055 677M170 500L412 677M1337 196l28 20M170 534L634 455M1090 378L1365 332M1244 677l121-21M170 209l80-13" stroke="#f00"/>
            <path d="M634 452L1095 374" stroke="#c8c4c0" stroke-width="2.500"/>
            <path d="M634 456L1095 377" stroke="#f00" stroke-dasharray="5 4"/>
            <path d="M635 452L656 636 655 677" stroke="#909090" stroke-width="2"/>
            <g stroke="#686868"><circle cx="767" cy="436" r="214"/>${ring(767, 222)}${ring(553, 436)}${ring(981, 436)}${ring(767, 650)}</g>
        </g>
        <g font-family="Liberation Mono, monospace" font-size="16" font-weight="700" text-anchor="middle" fill="#d0d0d0">
            ${bubble(414, 209, "C")}${bubble(1355, 209, "D")}${bubble(1352, 333, "7")}${bubble(183, 509, "B")}${bubble(1352, 658, "8")}${bubble(173, 209, "6")}
        </g>
        <path d="M408 205l12 8M1349 205l12 8M177 505l12 9M1345 334l14-2M1345 660l14-3" stroke="#f00"/>
        <g fill="none" stroke-width="4">
            <path d="M226 627l2-34" stroke="#0080ff"/><path d="M226 627l33-5" stroke="#0f0"/><path d="M226 628l16 12" stroke="#f00"/>
        </g>
        <path d="M228 582l-5 15 4 4 4-4z" fill="#0080ff"/><path d="M269 620l-12-4 3 9z" fill="#0f0"/><path d="M249 645l-11-1 5-8z" fill="#f00"/>
        <path d="M219 573h8l-9 10h10" fill="none" stroke="#0080ff"/><path d="M264 621l3 5 5-5M267 626l-1 4" fill="none" stroke="#0f0"/><path d="M255 635l9 9M264 635l-9 9" stroke="#f00"/>
    </svg>`;
}

define("model-view", () => `
    <style>
        :host { display: block; position: relative; flex: 1; min-height: 0; margin: 0 1px 0 -1px; background: #000; overflow: hidden; }
        .scene { display: block; width: 100%; height: 100%; }
        rebar-panel { position: absolute; left: 10px; top: 3px; }
    </style>
    ${buildScene()}
    <rebar-panel></rebar-panel>`);

define("status-bar", () => `
    <style>
        :host { display: flex; flex: none; box-sizing: border-box; height: 21px; padding-top: 1px; gap: 2px; background: #fafafa; }
        span {
            flex: 0 0 var(--w); box-sizing: border-box; padding-left: 1px; border: 1px solid #d4d4d4; border-left-color: #e4e4e4;
            background: linear-gradient(#fff, #ececec); font: 10px/18px "Liberation Mono", "Noto Sans CJK SC", monospace; white-space: nowrap;
        }
        b { font: 12px/18px "Noto Sans CJK SC", sans-serif; }
        .rest { flex: 1; }
    </style>
    <span style="--w: 148px">X=78892 Y=9646</span>
    <span style="--w: 78px"><b>层高</b>:4.5m</span>
    <span style="--w: 97px"><b>底标高</b>:-0.03m</span>
    <span style="--w: 49px">1(1)</span>
    <span class="rest"></span>
    <span style="--w: 70px">127.9 FPS</span>`);

define("task-bar", () => `
    <style>
        :host { display: flex; flex: none; height: 40px; background: #000c11; color: #fff; }
        button { display: grid; place-items: center; flex: none; box-sizing: border-box; width: 49px; height: 40px; margin: 0; padding: 0; border: 0; background: none; color: inherit; font: inherit; }
        .start { width: 48px; background: #000; }
        .search { display: flex; flex: 0 0 344px; align-items: center; background: #333; gap: 5px; box-sizing: border-box; padding: 0 14px 0 8px; }
        .search input { flex: 1; min-width: 0; padding: 0; border: 0; background: none; color: inherit; font: 14px/20px "Noto Sans", "Noto Sans CJK SC", sans-serif; }
        .search input::placeholder { color: #9a9a9a; opacity: 1; }
        .apps { display: flex; flex: 1; gap: 4px; padding-left: 2px; }
        .apps div { display: flex; }
        .run { border-bottom: 2px solid #76b9ed; width: 41px; margin: 0 4px; }
        .on { background: #384247; border-bottom: 2px solid #76b9ed; }
        .tray { display: flex; align-items: center; gap: 9px; }
        .stack { text-align: center; line-height: 17px; }
        .clock { width: 62px; }
        .cpu { margin-right: 9px; }
        .ime { margin-right: 6px; }
        .note { padding-right: 10px; background: #000; }
    </style>
    <button class="start" type="button" aria-label="开始"><svg width="16" height="16"><path d="M0 2.500l7-1V8H0zM8 1.300L16 0v8H8zM0 9h7v6.500l-7-1zM8 9h8v7l-8-1.200z" fill="#fff"/></svg></button>
    <label class="search"><svg width="23" height="24"><circle cx="11.500" cy="12" r="9" fill="none" stroke="#eee" stroke-width="3"/></svg>
        <input type="text" placeholder="在这里输入你要搜索的内容">
        <svg width="12" height="18"><rect x="3.500" y=".5" width="5" height="11" rx="1" fill="none" stroke="#bbb"/><path d="M.5 7v6.500h11V7M6 14v4M3 17.500h6" fill="none" stroke="#bbb"/></svg>
    </label>
    <div class="apps">
        <div>
            <button type="button"><svg width="24" height="24" viewBox="0 0 24 24"><g fill="#ddd"><circle cx="7.500" cy="7" r="5.500"/><circle cx="17" cy="7.500" r="5.500"/><circle cx="16.500" cy="17" r="5.500"/><circle cx="7" cy="16.500" r="5.500"/></g><path d="M12 1q-5 6 0 11t0 11M1 12q6-5 11 0t11 0" fill="none" stroke="#000c11" stroke-width="1.300"/></svg></button>
            <button type="button"><svg width="22" height="22" viewBox="0 0 22 22"><path d="M17 2Q4 0 3 10t9 9q8-2 6-8-4-5-8-1-1 6 4 4M20 3Q7 3 7 10q0 7 6 6" fill="none" stroke="#ccc" stroke-width="1.300"/></svg></button>
        </div>
        <div>
            <button type="button"><svg width="22" height="22" viewBox="0 0 22 22"><path d="M1 9Q3 1 12 1q9 1 9 12H7q1 5 7 5 3 0 6-2v4q-3 2-8 2-9-1-9-8 0-5 6-7-2 1-2 3h8q0-5-5-5-6 0-9 4z" fill="#0a7cdc"/></svg></button>
            <button type="button"><svg width="24" height="24" viewBox="0 0 24 24"><path d="M2 7l20-2v18L2 21z" fill="#fff"/><path d="M7 7q0-6 5-6t5 5" fill="none" stroke="#fff" stroke-width="1.500"/><path d="M7 10l4-.5V14H7zM12 9.500l5-.5v5h-5zM7 15h4v4l-4-.5zM12 15h5v4.500l-5-.5z" fill="#000"/></svg></button>
            <button type="button"><svg width="22" height="20"><path d="M0 1h8l1 3h13v16H0z" fill="#f8d474"/><path d="M0 6h22" stroke="#e0a83c"/><path d="M4 20v-9h14v9h-4v-5H8v5z" fill="#38a8e8"/></svg></button>
            <button type="button" class="run"><svg width="24" height="24" viewBox="0 0 24 24"><circle cx="12" cy="12" r="11" fill="#58c030"/><path d="M6 12h12q0-6-6-6t-6 6q0 6 6 6 4 0 5.500-3" fill="none" stroke="#fff" stroke-width="2.500"/><path d="M2 17Q8 8 21 5" fill="none" stroke="#d8f4c0" stroke-width="1.500"/></svg></button>
            <button type="button" class="run"><svg width="26" height="26" viewBox="0 0 26 26"><path d="M24 2q-4 4-9 3-8 0-7 8 1 7 6 6 4-1 3-5 0-3-3-3 2-3 6-1 4 3 1 9-4 6-11 5Q3 23 2 14 2 2 14 1q6 2 10 1z" fill="#2a9cf0"/></svg></button>
            <button type="button" class="run"><svg width="24" height="24" viewBox="0 0 24 24"><rect width="24" height="24" rx="3" fill="#f8a010"/><path d="M4 4h15l-2 17H3z" fill="#fff8e0"/><path d="M6 8h9M6 12h7M6 16h6" stroke="#b88"/><path d="M22 2L11 15l-1 4 4-3z" fill="#94400c"/></svg></button>
            <button type="button" class="on">${svg("app", 24)}</button>
        </div>
    </div>
    <div class="tray">
        <div class="stack cpu"><div>54%</div><div>CPU使用</div></div>
        <svg width="12" height="8"><path d="M1 7l5-5 5 5" fill="none" stroke="#fff" stroke-width="1.300"/></svg>
        <svg width="16" height="14"><path d="M5.500 5.500h9v6h-9zM1 1v3h4V1M3 4v6h2M2 0v2M4 0v2" fill="none" stroke="#fff"/><path d="M7 7h6v3H7z" fill="#fff"/></svg>
        <svg width="13" height="14"><path d="M1 13Q1 1 12 1M4 13Q4 4 12 4M7 13Q7 7 12 7M10 13q0-2 2-2" fill="none" stroke="#ccc"/></svg>
        <svg width="17" height="14"><path d="M.5 4.500H3l3-3v11l-3-3H.5zM9 5q2 2 0 4M11 3q4 4 0 8M13 1q5 6 0 12" fill="none" stroke="#fff"/></svg>
        <svg width="23" height="16"><rect x=".5" y="1.500" width="22" height="13" fill="none" stroke="#fff"/><path d="M3 5h18M3 8h18" stroke="#fff" stroke-dasharray="2 1"/><path d="M6 11.500h11" stroke="#fff"/></svg>
        <span class="ime">中</span>
        <svg width="16" height="16"><rect width="16" height="16" rx="2" fill="#f05020" transform="rotate(-6 8 8)"/><path d="M12 4H6Q3 5 4 7l7 2q2 3-2 4H4" fill="none" stroke="#fff" stroke-width="2"/></svg>
        <div class="stack clock"><div>16:25</div><div>2017/9/13</div></div>
        <button class="note" type="button"><svg width="26" height="28" viewBox="0 0 26 28"><path d="M1 3h13v11H7l-3 3v-3H1z" fill="#fff"/><path d="M4 6h8M4 9h8" stroke="#000"/><circle cx="16" cy="18" r="7.500" fill="#444" stroke="#999"/><text x="16" y="22" text-anchor="middle" font-size="12" font-weight="700" fill="#fff">2</text></svg></button>
    </div>`);

define("ime-bar", () => `
    <style>
        :host { display: flex; box-sizing: border-box; width: 178px; height: 25px; align-items: center; padding-left: 27px; gap: 7px; border: 1px solid #9cb4cc; background: #fff; color: #1a70c0; font: 700 15px/20px "Noto Sans CJK SC", sans-serif; }
        .logo { position: absolute; left: -7px; top: -4px; }
        svg { flex: none; }
    </style>
    <svg class="logo" width="29" height="29" viewBox="0 0 29 29"><rect x="2" y="2" width="24" height="24" rx="4" fill="#f05020" transform="rotate(-10 14 14)"/><path d="M22 7L12 8q-6 1-5 4t5 2l5 0q5 1 4 4t-6 3L7 22" fill="none" stroke="#fff" stroke-width="3"/></svg>
    <span>英</span>
    <svg width="14" height="14"><circle cx="5" cy="4" r="2" fill="#1a70c0"/><path d="M10 8q3 1 0 5" fill="none" stroke="#1a70c0" stroke-width="2"/></svg>
    <svg width="14" height="17"><rect x="4" width="6" height="10" rx="3" fill="#1a70c0"/><path d="M1 7q0 6 6 6t6-6M7 12v4M4 16h6" fill="none" stroke="#1a70c0" stroke-width="1.500"/></svg>
    <svg width="16" height="13"><rect width="16" height="13" rx="1" fill="#1a70c0"/><path d="M2 4h12M2 7h12" stroke="#fff" stroke-dasharray="2 1"/><path d="M4 10h8" stroke="#fff"/></svg>
    <svg width="16" height="16"><circle cx="6" cy="4" r="3" fill="#b0bcc8"/><path d="M0 14q0-6 6-6t4 6z" fill="#b0bcc8"/><text x="6" y="15" font-size="8" font-weight="700" fill="#8898a8">17</text></svg>
    <svg width="14" height="14"><path d="M4 1q3 2 6 0l4 3-2 3-1-1v8H3V6L2 7 0 4z" fill="#1a70c0"/></svg>
    <svg width="15" height="15"><path d="M1 14l7-7" stroke="#1a70c0" stroke-width="3"/><path d="M13 1l-3 3 1 1 3-3q2 5-3 6-5 0-4-4 2-4 6-3z" fill="#1a70c0"/></svg>`);

define("speed-ball", () => `
    <style>
        :host { display: block; box-sizing: border-box; width: 44px; height: 18px; border-radius: 0 0 22px 22px; background: #38b85c; border: 2px solid #8a9a8e; border-top: 0; box-shadow: 0 3px 5px #0004; color: #fff; text-align: center; font: 700 11px/14px "Noto Sans", sans-serif; }
    </style>
    <slot></slot>`);

define("ggj-app", () => `
    <style>
        :host { display: flex; flex-direction: column; height: 100vh; position: relative; }
        main { display: flex; flex: 1; min-height: 0; gap: 6px; padding-bottom: 1px; }
        .work { display: flex; flex: 1; min-width: 0; flex-direction: column; }
        .title-gap { display: inline-block; width: 52px; }
        .top { --row: 32px; padding-top: 2px; }
        .files { flex: 0 0 151px; }
        .calc { flex: 0 0 548px; }
        .grow { flex: 1; min-width: 0; }
        .offset { padding-right: 0; }
        .edit { flex: 0 0 781px; }
        .tall { --row: 29px; padding-top: 1px; }
        .low { --row: 27px; justify-content: center; }
        .low tool-group { width: 31px; margin-right: 340px; }
        .combos { display: flex; flex: none; gap: 3px; margin: 0 -2px; }
        .first { --width: 57px; }
        .arcs { --width: 55px; }
        .fields { display: flex; flex: none; align-items: center; gap: 3px; color: #808080; }
        .fields tool-sep { margin: 0; }
        .fields label { display: flex; align-items: center; gap: 7px; color: #000; white-space: nowrap; }
        .fields input { appearance: none; width: 12px; height: 12px; margin: 0; border: 1px solid #0078d7; background: #b4d4f0; }
        .wide { --width: 68px; }
        ime-bar { position: absolute; right: 167px; top: 3px; }
        speed-ball { position: absolute; left: 572px; top: 0; }
    </style>
    <title-bar>广联达BIM钢筋算量软件 GGJ2013 - [C:\\Users\\Administrator.PC-20141127NRHM\\Desktop\\白龙村-<span class="title-gap"></span>08-25-13-27-07(2166版).GGJ12]</title-bar>
    <menu-bar></menu-bar>
    <tool-row class="top">
        <tool-group class="files" nogrip more>
            <tool-button icon="newdoc" aria-label="新建"></tool-button>
            <tool-button icon="open" caret aria-label="打开"></tool-button>
            <tool-button icon="save" aria-label="保存"></tool-button>
            <tool-sep></tool-sep>
            <tool-button icon="undo" caret aria-label="撤销"></tool-button>
        </tool-group>
        <tool-group class="calc" nogrip more>
            <tool-button icon="define">定义</tool-button>
            <tool-button icon="sigma">汇总计算</tool-button>
            <tool-button icon="cloud">云检查</tool-button>
            <tool-button icon="slabtop" disabled>平齐板顶</tool-button>
            <tool-button icon="binocular">查找图元</tool-button>
            <tool-button icon="glasses">查看钢筋量</tool-button>
            <tool-button icon="batch" disabled>批量选择</tool-button>
        </tool-group>
        <tool-group class="grow" nogrip more>
            <tool-button icon="cube" caret>三维</tool-button>
            <tool-button icon="cubetop" caret>俯视</tool-button>
            <tool-button icon="orbit" active>动态观察</tool-button>
            <tool-button icon="localcube" disabled>局部三维</tool-button>
            <tool-sep></tool-sep>
            <tool-button icon="full">全屏</tool-button>
            <tool-button icon="zoom" caret>缩放</tool-button>
            <tool-button icon="pan" caret>平移</tool-button>
            <tool-button icon="screenrot" caret tight>屏幕旋转</tool-button>
            <tool-sep></tool-sep>
            <tool-button icon="floors">选择楼层</tool-button>
        </tool-group>
    </tool-row>
    <main>
        <module-dock></module-dock>
        <div class="work">
            <tool-row>
                <tool-group class="edit" more>
                    <tool-button icon="erase" disabled>删除</tool-button>
                    <tool-sep></tool-sep>
                    <tool-button icon="copy" disabled>复制</tool-button>
                    <tool-button icon="mirror" disabled>镜像</tool-button>
                    <tool-sep></tool-sep>
                    <tool-button icon="move" disabled>移动</tool-button>
                    <tool-button icon="rotate" disabled>旋转</tool-button>
                    <tool-sep></tool-sep>
                    <tool-button icon="extend" disabled>延伸</tool-button>
                    <tool-button icon="trim" disabled>修剪</tool-button>
                    <tool-sep></tool-sep>
                    <tool-button icon="break" disabled>打断</tool-button>
                    <tool-button icon="merge" disabled>合并</tool-button>
                    <tool-button icon="split" disabled>分割</tool-button>
                    <tool-sep></tool-sep>
                    <tool-button icon="align" disabled caret tight>对齐</tool-button>
                    <tool-button icon="offset" disabled>偏移</tool-button>
                    <tool-button icon="stretch" disabled>拉伸</tool-button>
                </tool-group>
                <tool-group class="grow offset">
                    <div class="combos"><combo-box class="first" label="偏移方式" value="不偏移"></combo-box></div>
                    <div class="fields">
                        <tool-sep></tool-sep>
                        <span>X=</span><spin-box label="X" value="0"></spin-box><span>mm</span>
                        <span>Y=</span><spin-box label="Y" value="0"></spin-box><span>mm</span>
                        <tool-sep></tool-sep>
                        <label><input type="checkbox">旋转</label>
                        <spin-box class="wide" label="旋转角度" value="0.000"></spin-box><span>°</span>
                    </div>
                </tool-group>
            </tool-row>
            <tool-row class="tall">
                <tool-group>
                    <div class="combos">
                        <combo-box class="first" label="楼层" value="首层"></combo-box>
                        <combo-box label="构件类别" value="基础"></combo-box>
                        <combo-box label="构件类型" value="桩承台"></combo-box>
                        <combo-box label="构件" value="CT-21"></combo-box>
                        <combo-box label="范围" value="整体"></combo-box>
                    </div>
                    <tool-sep></tool-sep>
                    <tool-button icon="props">属性</tool-button>
                    <tool-button icon="editbar">编辑钢筋</tool-button>
                    <tool-button icon="list">构件列表</tool-button>
                    <tool-button icon="picker">拾取构件</tool-button>
                </tool-group>
                <tool-group>
                    <tool-button icon="twopoint">两点</tool-button>
                    <tool-button icon="parallel">平行</tool-button>
                    <tool-button icon="angle" caret>点角</tool-button>
                    <tool-button icon="threeaxis" caret>三点辅轴</tool-button>
                    <tool-button icon="delaxis">删除辅轴</tool-button>
                    <tool-button icon="dimension" caret>尺寸标注</tool-button>
                </tool-group>
            </tool-row>
            <tool-row class="low"><tool-group></tool-group></tool-row>
            <tool-row>
                <tool-group>
                    <tool-button icon="cursor" caret>选择</tool-button>
                    <tool-sep></tool-sep>
                    <tool-button icon="point">点</tool-button>
                    <tool-button icon="rotpoint">旋转点</tool-button>
                    <tool-sep></tool-sep>
                    <tool-button icon="line" disabled>直线</tool-button>
                    <tool-button icon="arc" disabled caret tight>三点画弧</tool-button>
                    <combo-box class="arcs" framed label="画弧方式"></combo-box>
                    <tool-button icon="rect" disabled>矩形</tool-button>
                    <tool-sep></tool-sep>
                    <tool-button icon="smart" caret tight>智能布置</tool-button>
                    <tool-sep></tool-sep>
                    <tool-button icon="dirbar" disabled>调整钢筋方向</tool-button>
                    <tool-button icon="capbar" disabled>编辑承台加强筋</tool-button>
                    <tool-button icon="checkdim" caret>查改标注</tool-button>
                    <tool-button icon="applycap">应用到同名承台</tool-button>
                    <tool-button icon="slopecap">调整承台放坡</tool-button>
                </tool-group>
            </tool-row>
            <model-view></model-view>
            <tool-row class="tall">
                <tool-group>
                    <tool-button icon="ortho">正交</tool-button>
                    <tool-button icon="osnap" active>对象捕捉</tool-button>
                    <tool-button icon="dyn" active>动态输入</tool-button>
                </tool-group>
                <tool-group>
                    <tool-button icon="cross">交点</tool-button>
                    <tool-button icon="perp" active>垂点</tool-button>
                    <tool-button icon="mid" active>中点</tool-button>
                    <tool-button icon="vertex">顶点</tool-button>
                    <tool-button icon="coord">坐标</tool-button>
                </tool-group>
            </tool-row>
        </div>
    </main>
    <status-bar></status-bar>
    <task-bar></task-bar>
    <speed-ball>78</speed-ball>
    <ime-bar></ime-bar>`);
</script>
</body>
</html>
